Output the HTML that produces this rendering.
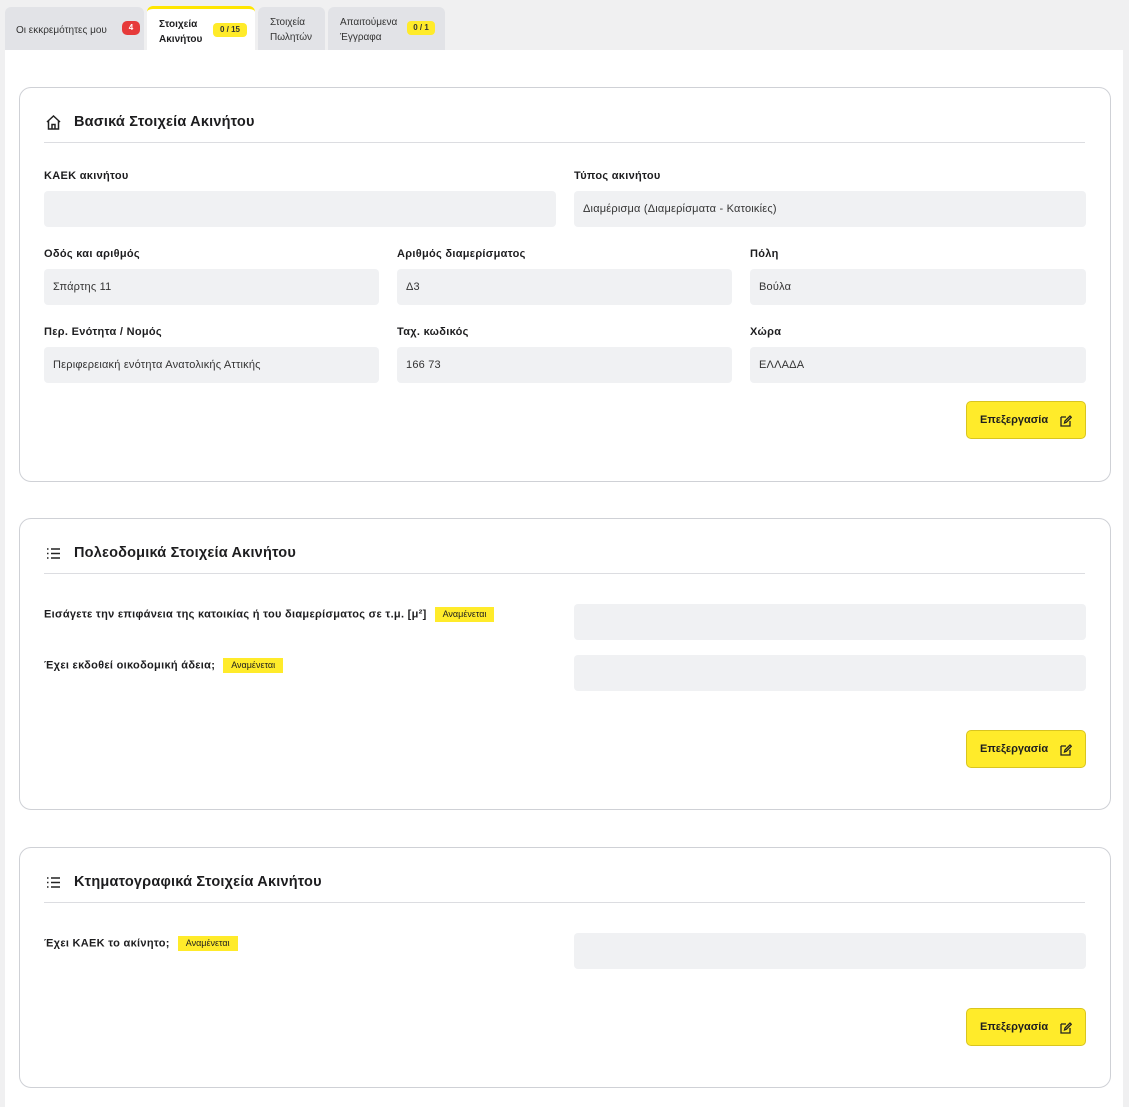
<!DOCTYPE html>
<html><head><meta charset="utf-8"><style>
*{box-sizing:border-box;margin:0;padding:0}
body{width:1129px;height:1107px;background:#f0f0f1;font-family:"Liberation Sans","Noto Sans CJK SC",sans-serif;color:#1d1d1f;position:relative;overflow:hidden}
.a{position:absolute}
.tab{position:absolute;top:7px;height:43px;background:#e2e3e7;border-radius:6px 6px 0 0;font-size:10px;color:#333;line-height:15px}
.badge{position:absolute;background:#ffeb2a;border-radius:4px;font-size:8px;font-weight:bold;height:14px;line-height:14px;text-align:center}
.panel{position:absolute;left:5px;top:50px;width:1118px;height:1057px;background:#fff}
.card{position:absolute;left:19px;width:1092px;border:1px solid #cfd1d6;border-radius:12px;background:#fff}
.title{position:absolute;left:74px;font-size:14.5px;font-weight:bold;letter-spacing:0.2px}
.div{position:absolute;left:44px;width:1041px;height:1px;background:#dcdde1}
.lbl{position:absolute;font-size:11px;font-weight:bold;letter-spacing:0.3px}
.inp{position:absolute;height:36px;background:#f0f1f3;border-radius:4px;font-size:11px;letter-spacing:0.2px;line-height:36px;padding-left:9px;color:#333}
.btn{position:absolute;left:966px;width:120px;height:38px;background:#ffeb2a;border:1px solid #d9c51f;border-radius:5px;font-size:11px;font-weight:bold;line-height:36px;padding-left:13px}
.btn svg{position:absolute;right:13px;top:13px}
.tag{display:inline-block;background:#ffeb2a;font-size:9px;font-weight:normal;letter-spacing:0;padding:0 8px;height:15px;line-height:15px;margin-left:8px;vertical-align:middle}
</style></head><body>
<div class="tab" style="left:5px;width:139px"><span class="a" style="left:11px;top:16px">Οι εκκρεμότητες μου</span><span class="badge" style="left:117px;top:14px;width:18px;background:#e63a3a;color:#fff;border-radius:5px">4</span></div>
<div class="tab" style="left:147px;width:108px;background:#fff;border-top:3px solid #ffe600;top:6px;height:44px"><span class="a" style="left:12px;top:8px;font-weight:bold;color:#1d1d1f">Στοιχεία<br>Ακινήτου</span><span class="badge" style="left:66px;top:14px;width:34px">0 / 15</span></div>
<div class="tab" style="left:258px;width:67px"><span class="a" style="left:12px;top:8px">Στοιχεία<br>Πωλητών</span></div>
<div class="tab" style="left:328px;width:117px"><span class="a" style="left:12px;top:8px">Απαιτούμενα<br>Έγγραφα</span><span class="badge" style="left:79px;top:14px;width:28px">0 / 1</span></div>
<div class="panel"></div>

<div class="card" style="top:87px;height:395px"></div>
<svg class="a" style="left:45px;top:114px" width="17" height="17" viewBox="0 0 17 17" fill="none" stroke="#222" stroke-width="1.5"><path d="M2 8 L8.5 2 L15 8 M3.5 7 V15 H13.5 V7 M7 15 V10.5 H10 V15"/></svg>
<div class="title" style="top:114px">Βασικά Στοιχεία Ακινήτου</div>
<div class="div" style="top:142px"></div>
<div class="lbl" style="left:44px;top:170px">ΚΑΕΚ ακινήτου</div>
<div class="lbl" style="left:574px;top:170px">Τύπος ακινήτου</div>
<div class="inp" style="left:44px;top:191px;width:512px"></div>
<div class="inp" style="left:574px;top:191px;width:512px">Διαμέρισμα (Διαμερίσματα - Κατοικίες)</div>
<div class="lbl" style="left:44px;top:248px">Οδός και αριθμός</div>
<div class="lbl" style="left:397px;top:248px">Αριθμός διαμερίσματος</div>
<div class="lbl" style="left:750px;top:248px">Πόλη</div>
<div class="inp" style="left:44px;top:269px;width:335px">Σπάρτης 11</div>
<div class="inp" style="left:397px;top:269px;width:335px">Δ3</div>
<div class="inp" style="left:750px;top:269px;width:336px">Βούλα</div>
<div class="lbl" style="left:44px;top:326px">Περ. Ενότητα / Νομός</div>
<div class="lbl" style="left:397px;top:326px">Ταχ. κωδικός</div>
<div class="lbl" style="left:750px;top:326px">Χώρα</div>
<div class="inp" style="left:44px;top:347px;width:335px">Περιφερειακή ενότητα Ανατολικής Αττικής</div>
<div class="inp" style="left:397px;top:347px;width:335px">166 73</div>
<div class="inp" style="left:750px;top:347px;width:336px">ΕΛΛΑΔΑ</div>
<div class="btn" style="top:401px">Επεξεργασία<svg width="12" height="12" viewBox="0 0 12 12" fill="none" stroke="#222" stroke-width="1.3"><path d="M1 2 H6 M1 2 V11 H10 V6"/><path d="M4.5 8 L5 6 L10 1 L11.3 2.3 L6.3 7.3 Z"/></svg></div>

<div class="card" style="top:518px;height:292px"></div>
<svg class="a" style="left:46px;top:547px" width="15" height="13" viewBox="0 0 15 13" stroke="#222" stroke-width="1.4"><path d="M1 2H2.5M1 6.5H2.5M1 11H2.5M5 2H14M5 6.5H14M5 11H14"/></svg>
<div class="title" style="top:545px">Πολεοδομικά Στοιχεία Ακινήτου</div>
<div class="div" style="top:573px"></div>
<div class="lbl" style="left:44px;top:607px">Εισάγετε την επιφάνεια της κατοικίας ή του διαμερίσματος σε τ.μ. [μ²]<span class="tag">Αναμένεται</span></div>
<div class="inp" style="left:574px;top:604px;width:512px"></div>
<div class="lbl" style="left:44px;top:658px">Έχει εκδοθεί οικοδομική άδεια;<span class="tag">Αναμένεται</span></div>
<div class="inp" style="left:574px;top:655px;width:512px"></div>
<div class="btn" style="top:730px">Επεξεργασία<svg width="12" height="12" viewBox="0 0 12 12" fill="none" stroke="#222" stroke-width="1.3"><path d="M1 2 H6 M1 2 V11 H10 V6"/><path d="M4.5 8 L5 6 L10 1 L11.3 2.3 L6.3 7.3 Z"/></svg></div>

<div class="card" style="top:847px;height:241px"></div>
<svg class="a" style="left:46px;top:876px" width="15" height="13" viewBox="0 0 15 13" stroke="#222" stroke-width="1.4"><path d="M1 2H2.5M1 6.5H2.5M1 11H2.5M5 2H14M5 6.5H14M5 11H14"/></svg>
<div class="title" style="top:874px">Κτηματογραφικά Στοιχεία Ακινήτου</div>
<div class="div" style="top:902px"></div>
<div class="lbl" style="left:44px;top:936px">Έχει ΚΑΕΚ το ακίνητο;<span class="tag">Αναμένεται</span></div>
<div class="inp" style="left:574px;top:933px;width:512px"></div>
<div class="btn" style="top:1008px">Επεξεργασία<svg width="12" height="12" viewBox="0 0 12 12" fill="none" stroke="#222" stroke-width="1.3"><path d="M1 2 H6 M1 2 V11 H10 V6"/><path d="M4.5 8 L5 6 L10 1 L11.3 2.3 L6.3 7.3 Z"/></svg></div>
</body></html>
